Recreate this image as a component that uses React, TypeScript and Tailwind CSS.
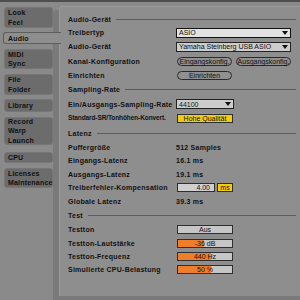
import React from "react";

const font = { fontFamily: '"Liberation Sans", Arial, sans-serif' };

function Tab({ lines, h, mt, selected }: { lines: string[]; h: string; mt: string; selected?: boolean }) {
  if (selected) {
    return (
      <div className={`relative z-10 ${mt} ml-[3px] w-[58px] ${h} bg-[#8e8e8e] border-y border-l border-[#5e5e5e] rounded-l-[3px] pl-[4px] flex flex-col justify-center`}>
        {lines.map((l) => (
          <div key={l} className="leading-[9px] text-[7px] font-bold tracking-[0.2px] text-[#111]">{l}</div>
        ))}
      </div>
    );
  }
  return (
    <div className={`${mt} ml-[4px] w-[49px] ${h} bg-[#6c6c6c] border border-[#767676] rounded-[3px] pl-[3px] flex flex-col justify-center`}>
      {lines.map((l) => (
        <div key={l} className="leading-[9.5px] text-[7px] font-bold tracking-[0.2px] text-[#111]">{l}</div>
      ))}
    </div>
  );
}

function Header({ label, h }: { label: string; h: string }) {
  return (
    <div className={`${h} flex items-center`}>
      <span className="text-[7px] font-bold tracking-[0.25px] text-[#111] leading-none">{label}</span>
      <div className="flex-1 ml-[5px] h-px bg-[#5c5c5c]" />
    </div>
  );
}

function Row({ label, h, narrow, children }: { label: string; h: string; narrow?: boolean; children?: React.ReactNode }) {
  return (
    <div className={`${h} flex items-center`}>
      <div className={`w-[108px] shrink-0 font-bold text-[#111] leading-none whitespace-nowrap ${narrow ? "text-[6.5px] tracking-[-0.1px]" : "text-[7px] tracking-[0.25px]"}`}>{label}</div>
      <div className="flex items-center">{children}</div>
    </div>
  );
}

function Dropdown({ text, w, strong }: { text: string; w: string; strong?: boolean }) {
  return (
    <div className={`${w} h-[10px] ${strong ? "bg-[#e2e2e2] border-[1.5px] border-[#111]" : "bg-[#cdcdcd] border border-[#222]"} flex items-center justify-between pl-[2px] pr-[2px]`}>
      <span className="text-[7px] text-[#111] leading-none">{text}</span>
      <svg width="6" height="4" viewBox="0 0 6 4"><polygon points="0,0 6,0 3,4" fill="#111" /></svg>
    </div>
  );
}

function Pill({ text, w }: { text: string; w: string }) {
  return (
    <div className={`${w} h-[9px] rounded-full border border-[#2a2a2a] bg-[#909090] flex items-center justify-center`}>
      <span className="text-[7px] text-[#111] leading-none">{text}</span>
    </div>
  );
}

function Box({ text, w, cls }: { text: string; w: string; cls: string }) {
  return (
    <div className={`${w} h-[9px] border border-[#2e2e2e] ${cls} flex items-center justify-center`}>
      <span className="text-[7px] text-[#111] leading-none">{text}</span>
    </div>
  );
}

function Slider({ text, pct }: { text: string; pct: number }) {
  return (
    <div className="relative w-[56px] h-[9px] border border-[#2e2e2e] bg-[#c6c6c6] flex items-center justify-center overflow-hidden">
      <div className="absolute left-0 top-0 bottom-0 bg-[#ee7d2c]" style={{ width: `${pct}%` }} />
      <span className="relative text-[7px] text-[#111] leading-none">{text}</span>
    </div>
  );
}

function Value({ text }: { text: string }) {
  return <span className="text-[7px] font-bold tracking-[0.25px] text-[#111] leading-none">{text}</span>;
}

export default function App() {
  return (
    <div style={font} className="w-[300px] h-[300px] overflow-hidden bg-[#8a8a8a] flex flex-col">
      <div className="h-[2px] bg-[#4e4e4e] shrink-0" />
      <div className="flex flex-1">
        <div className="w-[53px] shrink-0 flex flex-col">
          <Tab lines={["Look", "Feel"]} h="h-[21px]" mt="mt-[5px]" />
          <Tab lines={["Audio"]} h="h-[12px]" mt="mt-[4px]" selected />
          <Tab lines={["MIDI", "Sync"]} h="h-[20px]" mt="mt-[5px]" />
          <Tab lines={["File", "Folder"]} h="h-[21px]" mt="mt-[5px]" />
          <Tab lines={["Library"]} h="h-[13px]" mt="mt-[4px]" />
          <Tab lines={["Record", "Warp", "Launch"]} h="h-[28px]" mt="mt-[5px]" />
          <Tab lines={["CPU"]} h="h-[11px]" mt="mt-[7px]" />
          <Tab lines={["Licenses", "Maintenance"]} h="h-[20px]" mt="mt-[5px]" />
        </div>
        <div className="flex-1 flex flex-col">
          <div className="h-[8px] shrink-0" />
          <div className="flex-1 bg-[#7a7a7a] pl-[6px] rounded-tl-[4px]">
            <div className="h-full -mt-[4px] bg-[#8e8e8e] rounded-tl-[4px] border-l border-t border-[#9a9a9a] pl-[8px] pr-[4px] pt-[5px]">
              <Header label="Audio-Gerät" h="h-[14px]" />
              <Row label="Treibertyp" h="h-[13px]"><Dropdown text="ASIO" w="w-[115px]" strong /></Row>
              <Row label="Audio-Gerät" h="h-[15px]"><Dropdown text="Yamaha Steinberg USB ASIO" w="w-[115px]" /></Row>
              <Row label="Kanal-Konfiguration" h="h-[14px]">
                <div className="flex gap-[4px] ml-[1px]"><Pill text="Eingangskonfig." w="w-[55px]" /><Pill text="Ausgangskonfig." w="w-[55px]" /></div>
              </Row>
              <Row label="Einrichten" h="h-[14px]"><div className="ml-[1px]"><Pill text="Einrichten" w="w-[55px]" /></div></Row>
              <Header label="Sampling-Rate" h="h-[15px]" />
              <Row label="Ein/Ausgangs-Sampling-Rate" h="h-[14px]"><Dropdown text="44100" w="w-[58px]" /></Row>
              <Row label="Standard-SR/Tonhöhen-Konvert." h="h-[15px]" narrow><div className="ml-[1px]"><Box text="Hohe Qualität" w="w-[56px]" cls="bg-[#f2cc10]" /></div></Row>
              <Header label="Latenz" h="h-[14px]" />
              <Row label="Puffergröße" h="h-[14px]"><Value text="512 Samples" /></Row>
              <Row label="Eingangs-Latenz" h="h-[13px]"><Value text="16.1 ms" /></Row>
              <Row label="Ausgangs-Latenz" h="h-[14px]"><Value text="19.1 ms" /></Row>
              <Row label="Treiberfehler-Kompensation" h="h-[13px]">
                <div className="flex gap-[2px] ml-[1px]">
                  <div className="w-[38px] h-[9px] border border-[#2e2e2e] bg-[#cfcfcf] flex items-center justify-end pr-[4px]"><span className="text-[7px] text-[#111] leading-none">4.00</span></div>
                  <Box text="ms" w="w-[16px]" cls="bg-[#f2cc10]" />
                </div>
              </Row>
              <Row label="Globale Latenz" h="h-[14px]"><Value text="39.3 ms" /></Row>
              <Header label="Test" h="h-[14px]" />
              <Row label="Testton" h="h-[14px]"><div className="ml-[1px]"><Box text="Aus" w="w-[56px]" cls="bg-[#c6c6c6]" /></div></Row>
              <Row label="Testton-Lautstärke" h="h-[14px]"><div className="ml-[1px]"><Slider text="-36 dB" pct={48} /></div></Row>
              <Row label="Testton-Frequenz" h="h-[13px]"><div className="ml-[1px]"><Slider text="440 Hz" pct={62} /></div></Row>
              <Row label="Simulierte CPU-Belastung" h="h-[13px]"><div className="ml-[1px]"><Slider text="50 %" pct={62} /></div></Row>
            </div>
          </div>
        </div>
      </div>
    </div>
  );
}
